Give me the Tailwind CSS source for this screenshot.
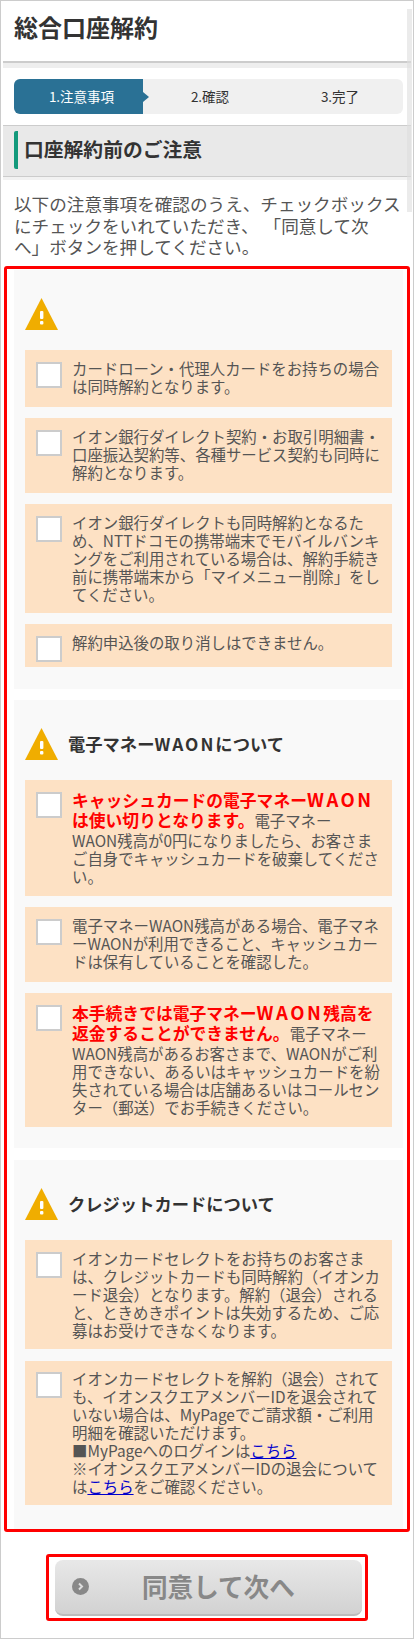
<!DOCTYPE html>
<html lang="ja">
<head>
  <meta charset="UTF-8" />
  <title>総合口座解約</title>
  <script src="https://cdn.jsdelivr.net/npm/@tailwindcss/browser@4"></script>
</head>
<body class="bg-white font-['Noto_Sans_CJK_JP','Noto_Sans',sans-serif] text-[#555] [text-spacing-trim:space-all]">
  <main class="relative w-[414px] h-[1639px] overflow-hidden border border-[#ccc] pl-[2px] pr-[2px]">
    <!-- scroll bar ghost -->
    <div class="absolute left-[406px] top-[8px] w-[5px] h-[203px] bg-[#ddd]/60"></div>

    <h1 class="h-[60px] pl-[11px] pt-[7px] text-[24px] leading-[38px] font-bold text-[#333]">総合口座解約</h1>
    <div class="h-[7px] border-t-2 border-[#ccc] bg-[#eee]"></div>

    <!-- steps -->
    <div class="mx-[11px] mt-[11px] flex h-[35px] w-[389px] rounded-md bg-[#f0f0f0] text-[13.5px] leading-[35px] text-[#333]">
      <div class="relative w-[129px] rounded-l-md bg-[#2a7195] pl-[6px] text-center text-white">
        1.注意事項
        <span class="absolute left-full top-[13px] border-y-[5px] border-l-[6px] border-y-transparent border-l-[#2a7195]"></span>
      </div>
      <div class="w-[130px] pl-[4px] text-center">2.確認</div>
      <div class="w-[130px] pl-[4px] text-center">3.完了</div>
    </div>

    <!-- section title -->
    <div class="mt-[11px] h-[52px] border-y border-[#ccc] bg-[#e9e9e9] pl-[11px] pt-[5px]">
      <h2 class="h-[38px] border-l-[4px] border-[#139a7c] rounded-[2px] pl-[6px] text-[19.8px] leading-[36px] font-bold text-[#333]">口座解約前のご注意</h2>
    </div>
    <div class="h-[3px] bg-[#f2f2f2]"></div>

    <p class="mt-[13px] pl-[11px] text-[17.6px] leading-[21.5px] whitespace-nowrap">以下の注意事項を確認のうえ、チェックボックス<br>にチェックをいれていただき、<span class="ml-[5px]">「同意して次</span><br>へ」ボタンを押してください。</p>

    <!-- red box -->
    <div class="mt-[8px] ml-[1px] flex h-[1266px] w-[406px] flex-col rounded-[3px] border-[3px] border-[#f00] pl-[7px] pr-[4px] pt-[1px] text-[15.4px] leading-[18px]">

      <section class="h-[419px] bg-[#f9f9f9] px-[11px] pt-[28px]">
        <div class="mb-[20px] flex h-[32px] items-center">
          <svg class="h-[32px] w-[33px]" viewBox="0 0 33 32"><path d="M16.5 0 33 32H0z" fill="#f0ad00"/><rect x="15" y="13" width="3.4" height="8" rx="1" fill="#fff"/><rect x="15" y="23" width="3.4" height="3.6" rx="1" fill="#fff"/></svg>
        </div>
        <div class="flex flex-col gap-[11px]">
          <div class="flex h-[57px] bg-[#fde1c4] pl-[11px] pt-[9px]">
            <span class="mr-[10px] mt-[3px] h-[26px] w-[26px] shrink-0 border-2 border-[#ccc] bg-white"></span>
            <p class="whitespace-nowrap">カードローン・代理人カードをお持ちの場合<br>は同時解約となります。</p>
          </div>
          <div class="flex h-[75px] bg-[#fde1c4] pl-[11px] pt-[9px]">
            <span class="mr-[10px] mt-[3px] h-[26px] w-[26px] shrink-0 border-2 border-[#ccc] bg-white"></span>
            <p class="whitespace-nowrap">イオン銀行ダイレクト契約・お取引明細書・<br>口座振込契約等、各種サービス契約も同時に<br>解約となります。</p>
          </div>
          <div class="flex h-[109px] bg-[#fde1c4] pl-[11px] pt-[9px]">
            <span class="mr-[10px] mt-[3px] h-[26px] w-[26px] shrink-0 border-2 border-[#ccc] bg-white"></span>
            <p class="whitespace-nowrap">イオン銀行ダイレクトも同時解約となるた<br>め、NTTドコモの携帯端末でモバイルバンキ<br>ングをご利用されている場合は、解約手続き<br>前に携帯端末から「マイメニュー削除」をし<br>てください。</p>
          </div>
          <div class="flex h-[43px] bg-[#fde1c4] pl-[11px] pt-[9px]">
            <span class="mr-[10px] mt-[3px] h-[26px] w-[26px] shrink-0 border-2 border-[#ccc] bg-white"></span>
            <p class="whitespace-nowrap">解約申込後の取り消しはできません。</p>
          </div>
        </div>
      </section>

      <section class="mt-[11px] h-[448px] bg-[#f9f9f9] px-[11px] pt-[28px]">
        <div class="mb-[20px] flex h-[32px] items-center gap-[10px]">
          <svg class="h-[32px] w-[33px]" viewBox="0 0 33 32"><path d="M16.5 0 33 32H0z" fill="#f0ad00"/><rect x="15" y="13" width="3.4" height="8" rx="1" fill="#fff"/><rect x="15" y="23" width="3.4" height="3.6" rx="1" fill="#fff"/></svg>
          <h3 class="text-[17.3px] font-bold text-[#333]">電子マネー<span class="tracking-[2px]">WAON</span>について</h3>
        </div>
        <div class="flex flex-col gap-[11px]">
          <div class="flex h-[116px] bg-[#fde1c4] pl-[11px] pt-[9px]">
            <span class="mr-[10px] mt-[3px] h-[26px] w-[26px] shrink-0 border-2 border-[#ccc] bg-white"></span>
            <p class="whitespace-nowrap"><strong class="text-[16.8px] leading-[20.5px] font-bold text-[#f00]">キャッシュカードの電子マネー<span class="text-[18.5px] tracking-[2.5px]">WAON</span><br>は使い切りとなります。</strong>電子マネー<br>WAON残高が0円になりましたら、お客さま<br>ご自身でキャッシュカードを破棄してくださ<br>い。</p>
          </div>
          <div class="flex h-[75px] bg-[#fde1c4] pl-[11px] pt-[9px]">
            <span class="mr-[10px] mt-[3px] h-[26px] w-[26px] shrink-0 border-2 border-[#ccc] bg-white"></span>
            <p class="whitespace-nowrap">電子マネーWAON残高がある場合、電子マネ<br>ーWAONが利用できること、キャッシュカー<br>ドは保有していることを確認した。</p>
          </div>
          <div class="flex h-[134px] bg-[#fde1c4] pl-[11px] pt-[9px]">
            <span class="mr-[10px] mt-[3px] h-[26px] w-[26px] shrink-0 border-2 border-[#ccc] bg-white"></span>
            <p class="whitespace-nowrap"><strong class="text-[16.8px] leading-[20.5px] font-bold text-[#f00]">本手続きでは電子マネー<span class="text-[18.5px] tracking-[2.5px]">WAON</span>残高を<br>返金することができません。</strong>電子マネー<br>WAON残高があるお客さまで、WAONがご利<br>用できない、あるいはキャッシュカードを紛<br>失されている場合は店舗あるいはコールセン<br>ター（郵送）でお手続きください。</p>
          </div>
        </div>
      </section>

      <section class="mt-[12px] flex-1 bg-[#f9f9f9] px-[11px] pt-[28px]">
        <div class="mb-[20px] flex h-[32px] items-center gap-[10px]">
          <svg class="h-[32px] w-[33px]" viewBox="0 0 33 32"><path d="M16.5 0 33 32H0z" fill="#f0ad00"/><rect x="15" y="13" width="3.4" height="8" rx="1" fill="#fff"/><rect x="15" y="23" width="3.4" height="3.6" rx="1" fill="#fff"/></svg>
          <h3 class="text-[17.3px] font-bold text-[#333]">クレジットカードについて</h3>
        </div>
        <div class="flex flex-col gap-[12px]">
          <div class="flex h-[109px] bg-[#fde1c4] pl-[11px] pt-[9px]">
            <span class="mr-[10px] mt-[3px] h-[26px] w-[26px] shrink-0 border-2 border-[#ccc] bg-white"></span>
            <p class="whitespace-nowrap">イオンカードセレクトをお持ちのお客さま<br>は、クレジットカードも同時解約（イオンカ<br>ード退会）となります。解約（退会）される<br>と、ときめきポイントは失効するため、ご応<br>募はお受けできなくなります。</p>
          </div>
          <div class="flex h-[144px] bg-[#fde1c4] pl-[11px] pt-[8px]">
            <span class="mr-[10px] mt-[3px] h-[26px] w-[26px] shrink-0 border-2 border-[#ccc] bg-white"></span>
            <p class="whitespace-nowrap">イオンカードセレクトを解約（退会）されて<br>も、イオンスクエアメンバーIDを退会されて<br>いない場合は、MyPageでご請求額・ご利用<br>明細を確認いただけます。<br>■MyPageへのログインは<a href="#" class="text-[#0000cc] underline">こちら</a><br>※イオンスクエアメンバーIDの退会について<br>は<a href="#" class="text-[#0000cc] underline">こちら</a>をご確認ください。</p>
          </div>
        </div>
      </section>
    </div>

    <!-- submit -->
    <div class="mt-[22px] ml-[43px] h-[67px] w-[322px] rounded-[3px] border-[3px] border-[#f00] pl-[6px] pr-[3px] pt-[3px]">
      <button class="flex h-[56px] w-full items-center rounded-[8px] border-b-2 border-[#bdbdbd] bg-gradient-to-b from-[#e8e8e8] to-[#d2d2d2] pl-[17px] text-[25.6px] font-bold text-[#888]">
        <svg class="h-[17px] w-[17px]" viewBox="0 0 17 17"><circle cx="8.5" cy="8.5" r="8.5" fill="#888"/><path d="M7 5.5 10 8.5 7 11.5" fill="none" stroke="#ddd" stroke-width="2"/></svg>
        <span class="ml-[53px]">同意して次へ</span>
      </button>
    </div>
  </main>
</body>
</html>
